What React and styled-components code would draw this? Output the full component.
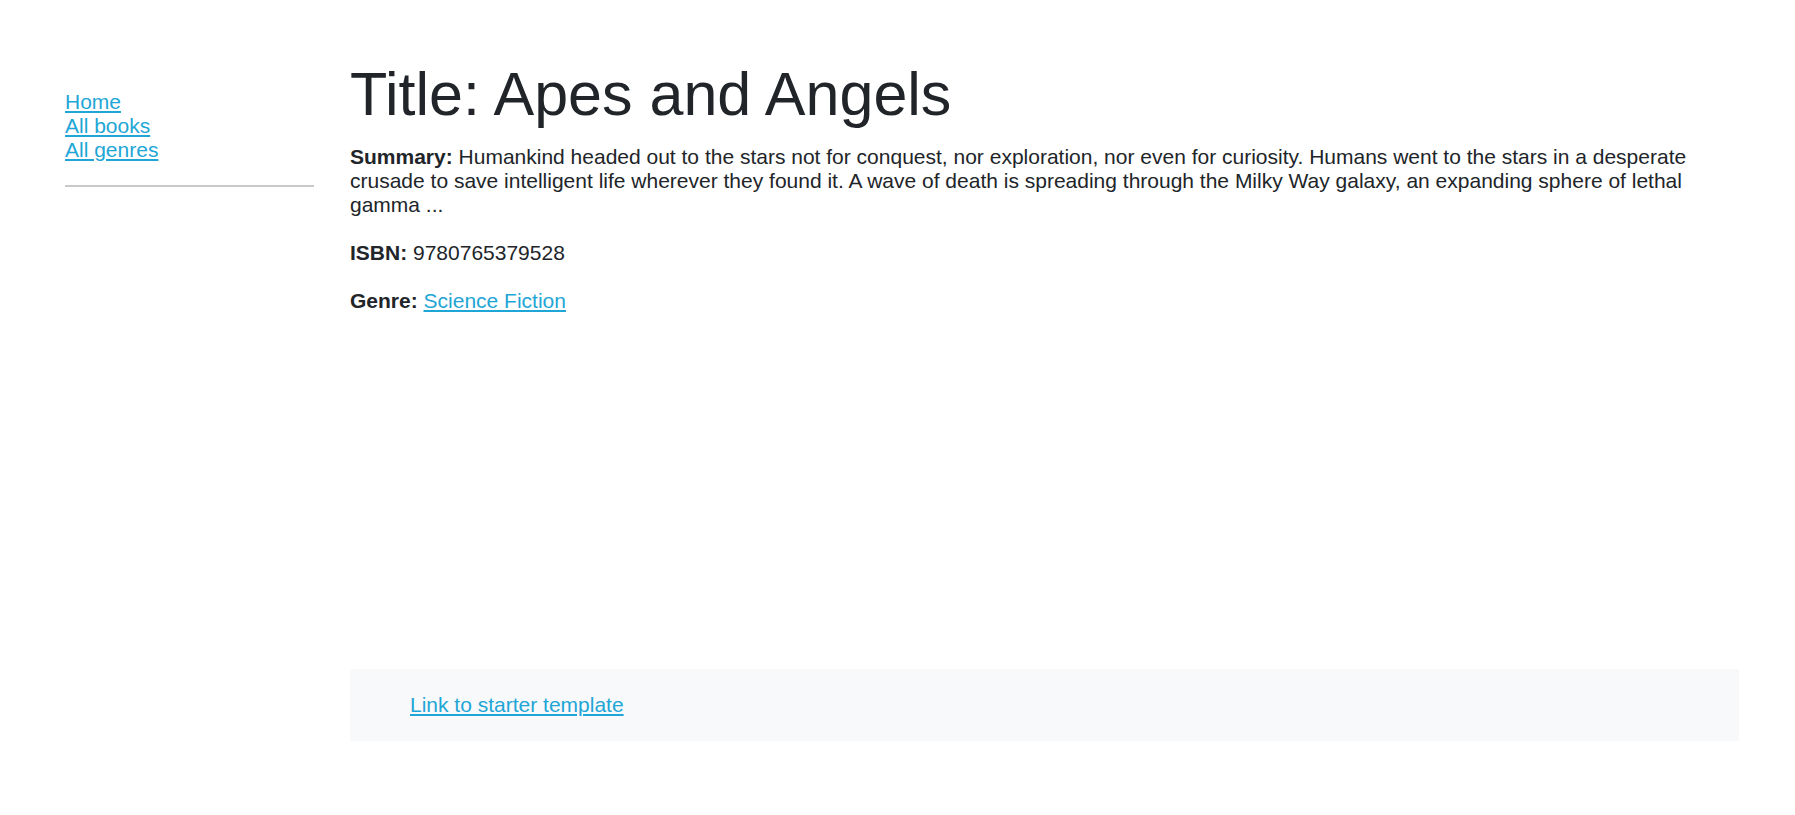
import React from 'react';
import styled, { createGlobalStyle } from 'styled-components';

const GlobalStyle = createGlobalStyle`
  body {
    margin: 0;
    background: #fff;
    color: #212529;
    font-family: "Liberation Sans", Arial, sans-serif;
    font-size: 21px;
    line-height: 24px;
  }
`;

const Page = styled.div`
  display: flex;
  gap: 36px;
  padding: 58px 56px 0 65px;
`;

const Sidebar = styled.nav`
  width: 249px;
  flex-shrink: 0;
  padding-top: 32px;
`;

const NavList = styled.ul`
  list-style: none;
  margin: 0;
  padding: 0;
`;

const Link = styled.a`
  color: #1ea6d6;
  text-decoration: underline;
`;

const Divider = styled.hr`
  margin: 23px 0 0;
  border: 0;
  border-top: 2px solid #c9c9c9;
`;

const Main = styled.main`
  flex: 1;
  min-width: 0;
`;

const Details = styled.section`
  min-height: 611px;
`;

const Title = styled.h1`
  margin: 0 0 14px;
  font-size: 61px;
  font-weight: 400;
  line-height: 1.2;
`;

const Field = styled.p`
  margin: 0 0 24px;
`;

const Label = styled.strong`
  font-weight: 700;
`;

const Footer = styled.footer`
  background: #f8f9fa;
  padding: 24px 60px;
`;

const navItems = [
  { id: 'home', label: 'Home' },
  { id: 'books', label: 'All books' },
  { id: 'genres', label: 'All genres' },
];

export default function App() {
  return (
    <>
      <GlobalStyle />
      <Page>
        <Sidebar>
          <NavList>
            {navItems.map(item => (
              <li key={item.id}>
                <Link href="#">{item.label}</Link>
              </li>
            ))}
          </NavList>
          <Divider />
        </Sidebar>
        <Main>
          <Details>
            <Title>Title: Apes and Angels</Title>
            <Field>
              <Label>Summary:</Label> Humankind headed out to the stars not for conquest, nor
              exploration, nor even for curiosity. Humans went to the stars in a desperate crusade
              to save intelligent life wherever they found it. A wave of death is spreading through
              the Milky Way galaxy, an expanding sphere of lethal gamma ...
            </Field>
            <Field>
              <Label>ISBN:</Label> 9780765379528
            </Field>
            <Field>
              <Label>Genre:</Label> <Link href="#">Science Fiction</Link>
            </Field>
          </Details>
          <Footer>
            <Link href="#">Link to starter template</Link>
          </Footer>
        </Main>
      </Page>
    </>
  );
}
